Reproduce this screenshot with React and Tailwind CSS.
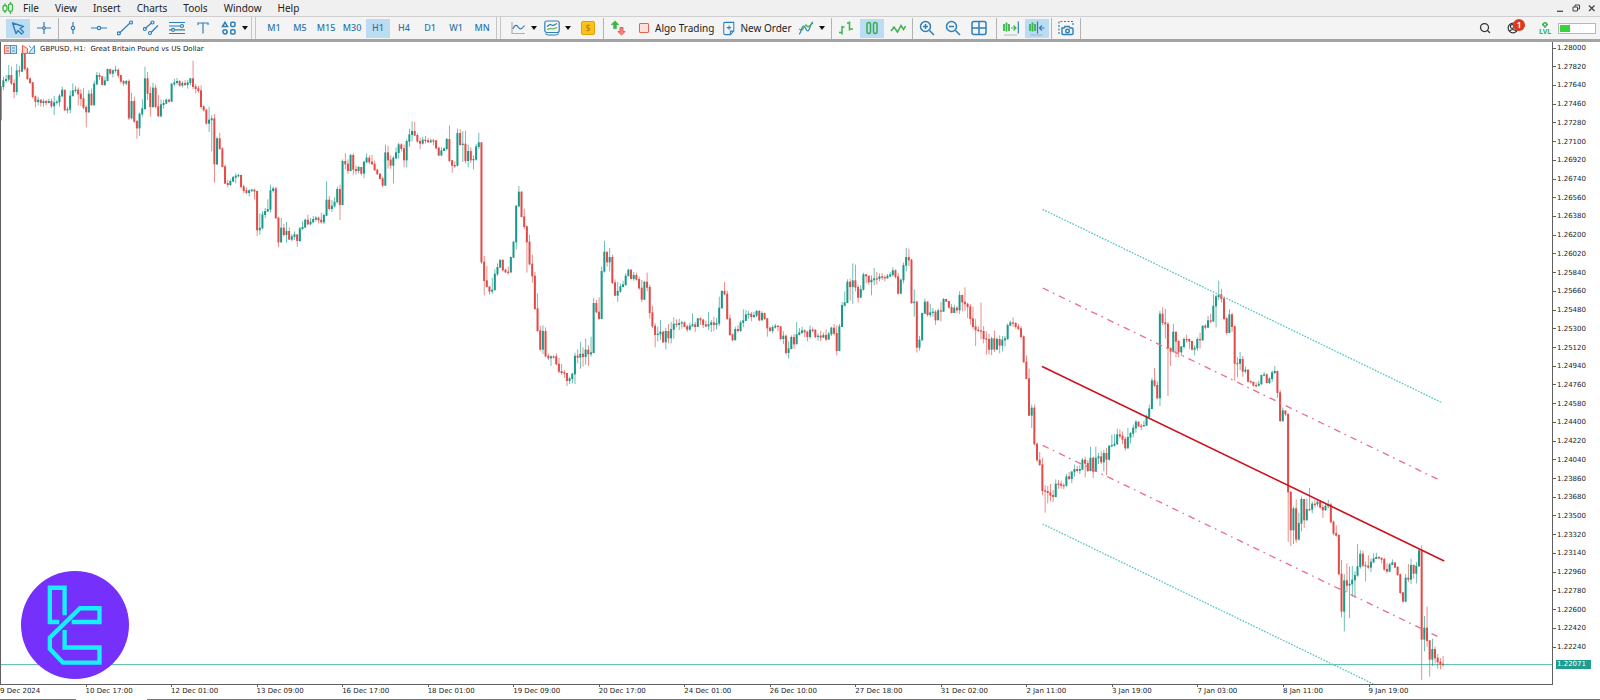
import { Search } from 'lucide-react'

// Bars are [close, high, low]; each one opens at the previous close.
// Values are thirds of a pixel below the segment's base.
const SEGMENTS = [
  {
    base: 120,
    bars: [
      [140,138,240],[122,110,150],[118,105,128],[106,75,125],[130,80,135],[155,118,175],[92,72,165],[94,78,110],
      [40,30,95],[86,40,92],[116,82,120],[128,112,132],[170,126,176],[185,166,202],[180,170,196],[188,178,200],
      [184,178,200],[188,180,196],[184,176,190],[198,176,204],[188,168,225],[186,180,194],[168,162,200],[150,140,172],
      [210,150,212],[208,200,220],[168,152,220],[152,130,168],[150,138,158],[162,142,196],[176,148,198],[202,144,208],
      [216,196,262],[162,150,218],[195,146,196],[132,122,196],[106,96,136],[110,98,120],[134,108,136],[122,110,138],
      [88,86,124],[100,86,104],[92,88,112],[90,78,98],[106,86,114],[124,104,130],[130,120,138],[124,120,136],
      [234,118,240],[184,158,238],[244,170,248],[264,240,296],[222,218,288],[206,178,230],[116,80,210],[160,96,180],
      [200,140,230],[144,128,204],[200,134,204],[228,165,230],[194,178,232],[190,180,206],[180,176,192],[184,176,188],
      [132,130,184],[128,116,138],[124,114,134],[136,120,140],[130,124,142],[134,120,138],[128,120,146],[116,114,136],
      [140,62,148],[146,132,160],[152,138,158],[200,136,206],[210,196,214],[250,206,254],[240,200,276],[236,226,334],
      [372,222,428],[296,290,376],[326,278,330],[380,322,382],[430,374,432],[434,420,442],[424,418,438],[412,408,425],
      [408,400,430],[406,402,412],[440,404,446],[452,434,460],[458,442,462],[452,448,470],[450,446,456],[454,446,478],
      [570,452,588],[564,520,584],[524,514,568],[514,504,534],[508,478,514],[452,434,518],[446,440,458],[534,440,536],
      [606,530,622],[564,534,608],[584,552,590],[574,546,608],[598,562,600],[590,582,604],[584,574,600],[602,590,620],
      [566,560,606],[562,544,570],[540,536,562],[552,524,556],[546,534,556],[538,528,548],[534,528,544],[540,530,550],
      [546,518,550],[526,520,552],[480,424,528],[506,468,512],[498,480,516],[486,472,502],[448,440,490],[494,434,540],
      [364,358,496],
    ],
  },
  {
    base: 330,
    bars: [
      [162,130,178],[182,148,192],[136,132,184],[178,130,194],[182,166,194],[172,168,190],[190,180,196],[156,152,204],
      [144,130,160],[156,136,162],[162,134,164],[180,152,182],[192,176,194],[206,190,208],[226,200,232],[128,104,228],
      [150,108,176],[166,136,176],[144,138,220],[128,112,148],[104,98,146],[116,100,124],[150,104,172],[94,88,172],
      [74,56,110],[64,34,94],[76,36,78],[94,70,98],[100,84,118],[90,80,104],[92,78,100],[96,84,98],
      [92,86,98],[92,86,106],[114,90,118],[136,110,138],[122,112,136],[116,112,122],[88,84,122],[152,46,156],
      [166,150,188],[166,154,174],[70,56,170],[104,58,108],[102,64,156],[152,62,160],[124,104,172],[150,112,158],
      [148,136,178],[110,102,152],[98,68,118],[456,96,462],[512,438,556],[530,468,532],[544,532,554],[540,504,552],
      [492,478,540],[472,460,498],[450,450,472],[480,450,484],[486,476,490],[486,470,494],[442,440,490],[396,394,444],
      [288,286,418],[246,228,292],[320,244,322],[350,296,358],[396,346,488],[462,374,466],[498,434,518],[596,486,600],
      [662,550,666],[718,648,722],[664,646,732],[738,652,742],[744,730,750],[740,736,768],[740,736,746],[762,730,766],
      [784,744,790],[788,762,794],[790,780,804],[812,790,828],[806,800,822],[792,788,820],[738,728,822],[742,718,760],
      [732,696,776],[740,712,770],[720,686,764],[732,706,768],[728,680,740],[580,564,730],[606,570,610],[626,562,630],
      [484,470,628],[426,392,488],[456,426,470],[442,414,484],[518,434,522],[556,508,558],[544,516,576],[530,520,548],
      [524,512,530],[498,490,528],[480,476,498],[506,478,508],[496,486,512],[508,488,512],[534,500,540],[568,510,576],
      [516,514,570],[532,488,544],[608,524,626],[648,588,654],[674,640,712],[672,650,694],[666,630,690],
    ],
  },
  {
    base: 690,
    bars: [
      [336,302,338],[304,294,358],[324,282,340],[298,276,340],[282,262,326],[284,268,292],[280,266,300],[278,272,296],
      [290,274,292],[298,284,306],[288,278,302],[284,250,290],[290,276,306],[266,264,290],[270,262,284],[284,266,294],
      [288,272,292],[284,246,300],[278,270,306],[284,260,304],[280,264,298],[234,200,288],[184,180,236],[192,156,196],
      [266,182,270],[314,254,318],[330,310,334],[298,290,330],[302,286,308],[278,272,306],[272,238,292],[254,240,272],
      [252,242,266],[260,246,274],[256,246,264],[244,240,262],[270,240,274],[250,244,272],[266,248,270],[294,264,320],
      [302,290,306],[292,286,310],[288,282,296],[290,286,304],[326,288,330],[318,304,342],[368,314,374],[356,334,386],
      [322,316,358],[342,312,356],[314,276,342],[308,294,316],[302,290,312],[306,298,322],[320,302,334],[300,286,326],
      [300,292,308],[320,298,324],[318,310,332],[322,302,334],[316,308,324],[328,298,334],[312,306,328],[294,290,318],
      [310,282,316],[362,286,376],[290,282,364],[226,216,290],[218,184,230],[156,148,220],[170,146,212],[152,100,222],
      [172,104,184],[202,164,218],[178,166,204],[134,128,182],[138,132,160],[156,138,164],[150,136,196],[146,114,166],
      [146,126,164],[140,130,154],[142,130,150],[144,136,154],[138,132,146],[134,126,142],[122,112,140],[140,118,146],
      [190,130,194],[150,146,192],[106,98,160],[82,54,124],[90,56,108],[218,86,222],[216,178,260],[352,212,368],
      [330,318,362],[250,248,332],[216,206,252],[254,214,260],[248,222,262],[246,234,260],[270,240,284],[242,236,264],
      [244,216,274],[208,204,246],[214,206,216],[232,212,236],[248,222,250],[234,224,248],[240,228,250],[196,184,252],
      [216,194,244],[222,172,242],[230,218,264],[266,222,284],[290,230,296],[300,266,348],[302,290,306],[304,218,328],
      [326,288,340],[328,304,374],[358,312,374],[326,320,376],[358,302,366],[328,322,360],[346,316,370],[330,318,364],
      [326,318,350],[286,280,330],[278,272,288],[280,262,290],[290,276,296],[296,282,300],[320,288,326],[396,316,398],
    ],
  },
  {
    base: 810,
    bars: [
      [326,256,328],[436,296,438],[414,404,474],[522,404,526],[570,518,576],[584,546,588],[662,564,676],[664,646,728],
      [668,648,700],[676,642,694],[680,660,696],[642,628,682],[642,630,656],[646,632,656],[646,640,658],[620,612,650],
      [626,606,630],[606,602,640],[598,584,620],[602,588,608],[598,586,612],[570,564,600],[580,560,622],[602,570,606],
      [564,530,604],[604,560,624],[564,530,606],[560,548,582],[576,544,582],[550,540,604],[568,534,616],[528,526,572],
      [526,494,532],[522,492,530],[494,476,524],[498,478,506],[508,484,522],[534,500,542],[502,474,536],[490,486,520],
      [474,464,502],[456,450,488],[468,454,472],[468,462,480],[466,452,470],[440,434,468],[416,404,444],[332,324,418],
      [346,294,352],[384,334,388],[132,122,408],[158,112,166],[162,116,206],[234,156,378],[244,234,288],[186,162,248],
      [214,186,262],[246,210,262],[230,228,258],[208,202,236],[208,194,218],[214,206,236],[238,212,242],[234,226,256],
      [208,202,242],[210,188,236],[168,166,212],[172,162,178],[152,138,174],[154,132,160],[108,72,154],[80,74,172],
      [74,32,90],[86,56,98],[146,82,150],[188,140,194],[134,118,190],[170,128,186],[280,166,332],[280,262,322],
      [268,246,300],[304,258,320],[300,290,310],[334,298,338],[336,332,340],[346,342,350],[346,336,352],[342,332,350],
      [316,314,344],[314,306,318],[338,310,340],[326,322,342],[308,302,336],[304,288,312],[368,302,384],[452,360,456],
      [422,412,456],[432,424,438],[666,432,816],[780,664,828],[716,710,822],[808,688,818],[760,728,812],[688,680,784],
      [750,688,774],[718,686,752],[718,654,722],[702,694,730],[702,690,712],[696,690,710],[712,690,716],[720,704,744],
      [708,700,722],[704,690,714],[756,698,760],[790,752,796],[796,766,800],[912,792,914],[1024,870,1042],[932,912,1084],
      [946,880,966],[942,890,1044],[930,888,980],[916,904,984],[890,822,920],[852,840,896],[886,842,892],[888,874,934],
      [892,856,896],[876,866,906],[866,850,880],[862,848,866],[864,858,868],[868,862,880],[898,864,902],[904,880,910],
      [884,878,906],[878,868,884],[892,878,894],[914,888,918],[968,910,972],[994,966,998],[924,912,996],[928,882,936],
      [886,866,942],[910,884,926],[888,876,940],[842,838,890],[1108,826,1230],[1074,1038,1144],[1112,1010,1130],
      [1168,1110,1220],[1138,1106,1188],[1164,1130,1180],[1176,1152,1196],[1182,1164,1198],[1184,1158,1190],
    ],
  },
]

const bars = SEGMENTS.flatMap((s) => s.bars.map((b) => b.map((v) => v + s.base)))
const candles = bars.map(([close, high, low], i) => {
  const open = i === 0 ? 360 : bars[i - 1][0]
  return { x: 2 + i * 8.013, open, close, high, low, up: close < open }
})

const PRICES = Array.from({ length: 33 }, (_, i) => (1.28 - i * 0.0018).toFixed(5))

const TIMES = [
  '9 Dec 2024', '10 Dec 17:00', '12 Dec 01:00', '13 Dec 09:00', '16 Dec 17:00', '18 Dec 01:00',
  '19 Dec 09:00', '20 Dec 17:00', '24 Dec 01:00', '26 Dec 10:00', '27 Dec 18:00', '31 Dec 02:00',
  '2 Jan 11:00', '3 Jan 19:00', '7 Jan 03:00', '8 Jan 11:00', '9 Jan 19:00',
]

const MENU = ['File', 'View', 'Insert', 'Charts', 'Tools', 'Window', 'Help']
const TIMEFRAMES = ['M1', 'M5', 'M15', 'M30', 'H1', 'H4', 'D1', 'W1', 'MN']

function Icon({ children, className = 'w-4 h-4 text-[#2f7fb8]' }) {
  return (
    <svg viewBox="0 0 16 16" fill="none" stroke="currentColor" strokeWidth="1.2" className={className} aria-hidden="true">
      {children}
    </svg>
  )
}

function ToolButton({ label, active, children }) {
  return (
    <button
      type="button"
      aria-label={label}
      className={`w-6 h-[19px] shrink-0 flex items-center justify-center ${active ? 'bg-[#bcdcf4]' : 'hover:bg-[#dcecf8]'}`}
    >
      {children}
    </button>
  )
}

function Arrow({ label }) {
  return (
    <button type="button" aria-label={label} className="w-2 h-[19px] shrink-0 flex items-center justify-center">
      <svg viewBox="0 0 6 4" className="w-[6px] h-1" aria-hidden="true"><path d="M0 0h6L3 4z" fill="#111" /></svg>
    </button>
  )
}

function Divider() {
  return <div className="w-px h-[21px] shrink-0 bg-[#b4b4b4]" />
}

function Grip() {
  return <div className="w-[5px] h-[22px] shrink-0 border-x border-[#c4c4c4]" />
}

function MenuBar() {
  return (
    <header className="h-4 shrink-0 flex items-center bg-[#f0f0f0] pl-[2px] pr-1">
      <svg viewBox="0 0 12 12" className="w-3 h-3" fill="none" stroke="#3cb54a" strokeWidth="1.3" aria-hidden="true">
        <path d="M3 1.5v2M3 9v2M8.500 0v2M8.500 9.500v2.500" />
        <rect x="1" y="3.500" width="4" height="5.500" rx="1.800" />
        <rect x="6.500" y="2" width="4" height="7.500" rx="1.800" />
      </svg>
      <nav className="flex items-center gap-4 pl-[9px] text-[10px] leading-4 text-[#222]">
        {MENU.map((m) => (
          <button key={m} type="button" className="hover:text-[#2f7fb8]">{m}</button>
        ))}
      </nav>
      <div className="ml-auto flex items-center gap-2 text-[#444]">
        <button type="button" aria-label="Minimize">
          <svg viewBox="0 0 8 8" className="w-2 h-2" stroke="currentColor" strokeWidth="1.3"><path d="M1 7.300h6" /></svg>
        </button>
        <button type="button" aria-label="Restore">
          <svg viewBox="0 0 8 8" className="w-2 h-2" fill="none" stroke="currentColor"><path d="M1 3h4.500v4H1zM3 3V1h4.500v4h-2" /></svg>
        </button>
        <button type="button" aria-label="Close">
          <svg viewBox="0 0 8 8" className="w-2 h-2" stroke="currentColor" strokeWidth="1.300"><path d="M1 1.500l5.500 5.500M6.500 1.500L1 7" /></svg>
        </button>
      </div>
    </header>
  )
}

function Toolbar() {
  return (
    <div className="h-[23px] shrink-0 flex items-center bg-[#f4f4f4] border-t border-[#cfcfcf] text-[10px] text-[#222]">
      <div className="flex items-center gap-[2px] pl-[6px]">
        <ToolButton label="Cursor" active>
          <Icon><path d="M2.500 3l11 3.500-3.500 2 3.500 3.500-2 2L8 10.500l-2 3z" strokeLinejoin="round" strokeWidth="1.400" /></Icon>
        </ToolButton>
        <ToolButton label="Crosshair">
          <Icon><path d="M8 2v4.500M8 9.500V14M1 8h5.500M9.500 8H15" /><circle cx="8" cy="8" r="1.300" /></Icon>
        </ToolButton>
        <Divider />
        <ToolButton label="Vertical line">
          <Icon><path d="M8 2v4.300M8 9.700V14" /><circle cx="8" cy="8" r="1.700" /></Icon>
        </ToolButton>
        <ToolButton label="Horizontal line">
          <Icon><path d="M0 8h6.300M9.700 8H16" /><circle cx="8" cy="8" r="1.700" /></Icon>
        </ToolButton>
        <ToolButton label="Trend line">
          <Icon><path d="M2.500 13L13 3" /><circle cx="1.800" cy="13.400" r="1.500" /><circle cx="14" cy="2.500" r="1.500" /></Icon>
        </ToolButton>
        <ToolButton label="Equidistant channel">
          <Icon>
            <path d="M2 8.500L8.500 3M8 12.500L15 5.500" />
            <circle cx="1.800" cy="9" r="1.500" /><circle cx="9.500" cy="2.500" r="1.500" /><circle cx="7" cy="13" r="1.500" />
          </Icon>
        </ToolButton>
        <ToolButton label="Fibonacci">
          <Icon><path d="M0 2.500h16M0 6h11.500M0 9.800h2.500M5.500 9.800H16M0 13.500h16" /><circle cx="13" cy="6" r="1.500" /><circle cx="4" cy="9.800" r="1.500" /></Icon>
        </ToolButton>
        <ToolButton label="Text">
          <Icon><path d="M3 5V3h10v2M8 3v10.500" /></Icon>
        </ToolButton>
        <div className="flex">
          <ToolButton label="Objects">
            <Icon>
              <path d="M4 2.300L6.500 6.500h-5z" strokeWidth="1.500" /><rect x="9.800" y="2.300" width="4.200" height="4.200" rx="1" strokeWidth="1.500" />
              <circle cx="4" cy="11.800" r="2.100" strokeWidth="1.500" /><rect x="9.800" y="9.700" width="4.200" height="4.200" rx="1.200" strokeWidth="1.500" />
            </Icon>
          </ToolButton>
          <Arrow label="More objects" />
        </div>
        <Grip />
      </div>

      <div className="flex items-center gap-[2px] pl-[6px]">
        {TIMEFRAMES.map((t) => (
          <button
            key={t}
            type="button"
            className={`w-6 h-[19px] flex items-center justify-center text-[9px] font-medium text-[#2a76ad] ${t === 'H1' ? 'bg-[#bcdcf4]' : 'hover:bg-[#dcecf8]'}`}
          >
            {t}
          </button>
        ))}
        <Grip />
      </div>

      <div className="flex items-center pl-[5px]">
        <ToolButton label="Chart type"><Icon><path d="M2 2v11.500h13" stroke="#b0b0b0" /><path d="M3 9c2-5 4-4 5.500-1.500S12 9 14.500 5.500" /></Icon></ToolButton>
        <Arrow label="Chart types" />
        <div className="w-[2px]" />
        <ToolButton label="Indicators">
          <Icon>
            <rect x=".8" y="1" width="14.400" height="11.500" rx="2" /><path d="M1.500 13.500q1 1.500 3 1.500h7q2 0 3-1.500" />
            <path d="M3 6.500l3-2 3 1 4-2" /><path d="M3 9.500l3-1 3 .5 4-1.500" stroke="#3cb54a" />
          </Icon>
        </ToolButton>
        <Arrow label="Indicator list" />
        <div className="w-1" />
        <ToolButton label="Market">
          <span className="w-[14px] h-[14px] rounded-[2px] bg-[#fbc21a] border border-[#e0a00c] text-[#b47800] text-[9px] leading-3 text-center">$</span>
        </ToolButton>
        <div className="w-[3px]" />
        <Divider />
        <div className="w-[2px]" />
        <ToolButton label="Signals">
          <Icon>
            <path d="M5 .8l4 3.900H6.500v4h-3v-4H1z" fill="#3cb54a" stroke="#3cb54a" strokeWidth=".5" />
            <path d="M11.500 15l3.700-3.500H13V7.500h-3v4H7.800z" fill="#f2877f" stroke="#e5534b" strokeWidth=".9" />
          </Icon>
        </ToolButton>
      </div>

      <button type="button" className="flex items-center gap-[6px] pl-[9px] h-[19px]">
        <span className="w-[10px] h-[10px] rounded-[1px] border border-[#e5634f] bg-[#fde0da]" />
        Algo Trading
      </button>
      <button type="button" className="flex items-center gap-1 pl-2 h-[19px]">
        <Icon className="w-[14px] h-[15px] text-[#2f7fb8]">
          <path d="M3 1h10.500v10l-4 4H3.500Q2 15 2 13.500V2Q2 1 3 1zM13.500 11h-4v4" /><path d="M8 4.500v5M5.500 7h5" />
        </Icon>
        New Order
      </button>
      <div className="flex items-center gap-[2px] pl-[2px]">
        <div className="flex">
          <ToolButton label="Strategy">
            <Icon>
              <path d="M1 14c2 0 2.500-8 4.500-8S8 11.500 10 11 12 3 15 2" />
              <path d="M1 9l3 1 4-5 2 2 5-4" stroke="#3cb54a" />
            </Icon>
          </ToolButton>
          <Arrow label="Strategies" />
        </div>
        <div className="w-px" />
        <Divider />
        <ToolButton label="Bar chart">
          <Icon className="w-4 h-4 text-[#3cb54a]"><path d="M4 6v8.500M1 12.500h3M4 7h2.500M11.500 1.500v9M9 3h2.500M11.500 9H15" strokeWidth="1.500" /></Icon>
        </ToolButton>
        <ToolButton label="Candlesticks" active>
          <Icon className="w-4 h-4 text-[#35b050]"><rect x="3" y="2.500" width="3.500" height="11" rx="1.500" strokeWidth="1.500" /><rect x="9.500" y="2.500" width="3.500" height="11" rx="1.500" strokeWidth="1.500" /></Icon>
        </ToolButton>
        <ToolButton label="Line chart">
          <Icon className="w-4 h-4 text-[#3cb54a]"><path d="M1 11l3-4 3.500 5L11 5.500l2.500 4L15.500 6" strokeWidth="1.500" /></Icon>
        </ToolButton>
        <Divider />
        <ToolButton label="Zoom in">
          <Icon><circle cx="6.500" cy="6.500" r="5" strokeWidth="1.500" /><path d="M10.500 10.500L15 15M6.500 4v5M4 6.500h5" strokeWidth="1.500" /></Icon>
        </ToolButton>
        <ToolButton label="Zoom out">
          <Icon><circle cx="6.500" cy="6.500" r="5" strokeWidth="1.500" /><path d="M10.500 10.500L15 15M4 6.500h5" strokeWidth="1.500" /></Icon>
        </ToolButton>
        <ToolButton label="Tile windows">
          <Icon><rect x="1" y="1.500" width="14" height="13" rx="2" strokeWidth="1.500" /><path d="M8 1.500v13M1 8h14" strokeWidth="1.500" /></Icon>
        </ToolButton>
        <div className="w-px" />
        <Divider />
        <ToolButton label="Auto scroll">
          <Icon className="w-[18px] h-4 text-[#3cb54a]">
            <path d="M1 4v7M3.500 2.500v9M6 4v7" strokeWidth="1.800" /><path d="M8 8h4.500M10.500 5.500L13 8l-2.500 2.500" /><path d="M15.300 1.500v12" stroke="#2f7fb8" />
            <path d="M1 15h13" stroke="#c0c0c0" />
          </Icon>
        </ToolButton>
        <ToolButton label="Chart shift" active>
          <Icon className="w-[18px] h-4 text-[#3cb54a]">
            <path d="M1 4v7M3.500 2.500v9M6 4v7" strokeWidth="1.800" /><path d="M8.500 1.500v12M11 8h4.500M13 5.500L10.500 8l2.500 2.500" stroke="#2f7fb8" />
            <path d="M1 15h13" stroke="#9fc0d8" />
          </Icon>
        </ToolButton>
        <Divider />
        <ToolButton label="Screenshot">
          <Icon>
            <path d="M1 14V1.500h14V6" strokeDasharray="2 1.500" />
            <path d="M4 8h2l1-1.500h4L12 8h2q1 0 1 1v4.500q0 1-1 1H5q-1 0-1-1z" strokeWidth="1.400" /><circle cx="9.500" cy="11" r="1.800" strokeWidth="1.400" />
          </Icon>
        </ToolButton>
        <Divider />
      </div>

      <div className="ml-auto flex items-center pr-1">
        <button type="button" aria-label="Search"><Search className="w-3 h-3 text-[#333]" strokeWidth={2.5} /></button>
        <button type="button" aria-label="Notifications" className="relative ml-4 w-4 h-[19px] flex items-center">
          <Icon className="w-3 h-3 text-[#333]"><circle cx="8" cy="8" r="6.500" strokeWidth="1.600" /><circle cx="7" cy="6" r="2.500" strokeWidth="1.500" /><path d="M3 12.500q4-5 10 0" strokeWidth="1.500" /></Icon>
          <span className="absolute left-[6px] top-0 w-3 h-3 rounded-full bg-[#e03a1e] text-white text-[9px] leading-3 font-semibold text-center">1</span>
        </button>
        <div className="ml-4 w-3 flex flex-col items-center text-[#2fb34a]">
          <svg viewBox="0 0 8 6" className="w-2 h-[6px]" fill="none" stroke="currentColor" strokeWidth="1.400" aria-hidden="true">
            <circle cx="4" cy="2.500" r="1.700" /><path d="M1 2.500h1M6 2.500h1M4 4.500V6" />
          </svg>
          <span className="text-[7px] leading-[7px] font-bold">LVL</span>
        </div>
        <div className="ml-[7px] w-[38px] h-[11px] bg-white border border-[#b8b8b8] p-px">
          <div className="w-[10px] h-full bg-[#35d43b]" />
        </div>
      </div>
    </div>
  )
}

function PriceChart() {
  return (
    <svg viewBox="3 126 4653 1926" preserveAspectRatio="none" className="block w-full h-full" role="img" aria-label="GBPUSD hourly candles">
      <path d="M3 1994H4656" stroke="#4fb3a6" strokeWidth="3" />
      {candles.map((c) => {
        const top = Math.min(c.open, c.close)
        return (
          <g key={c.x} fill={c.up ? '#189a8a' : '#e24b47'}>
            <rect x={c.x - 1} y={c.high} width="2.500" height={c.low - c.high} opacity=".75" />
            <rect x={c.x - 3} y={top - 1} width="6" height={Math.max(4, Math.abs(c.open - c.close) + 2)} />
          </g>
        )
      })}
      <g fill="none" stroke="#5cc6c4" strokeWidth="4" strokeDasharray="5 4">
        <path d="M3128 628L4326 1208" />
        <path d="M3128 1572L4120 2052" />
      </g>
      <g fill="none" stroke="#e8708e" strokeWidth="4" strokeDasharray="20 14 5 15">
        <path d="M3128 864L4320 1441" />
        <path d="M3128 1336L4320 1913" />
      </g>
      <path d="M3128 1100L4331 1682" fill="none" stroke="#cc1420" strokeWidth="5" strokeLinecap="round" />
    </svg>
  )
}

function Watermark() {
  return (
    <svg viewBox="64 64 322 322" className="absolute left-5 bottom-[5px] w-[108px] h-[108px]" fill="none" aria-hidden="true">
      <circle cx="225" cy="225" r="161" fill="#7530fb" />
      <g stroke="#16effc" strokeWidth="13">
        <path d="M178 216H150V114H194V196" />
        <path d="M215 216H298V175H240L150 263V296L189 337H298V292H194V240" />
      </g>
    </svg>
  )
}

export default function App() {
  return (
    <div className="h-screen flex flex-col overflow-hidden bg-white font-['Noto_Sans',sans-serif]">
      <MenuBar />
      <Toolbar />
      <div className="h-[3px] shrink-0 bg-[#a3a3a3]" />

      <main className="flex-1 min-h-0 flex font-['DejaVu_Sans',sans-serif] text-[7px] text-[#222]">
        <section className="flex-1 min-w-0 flex flex-col">
          <div className="relative flex-1 min-h-0 border-x border-b border-[#606060]">
            <PriceChart />
            <div className="absolute left-[3px] top-px flex items-center gap-[5px] leading-3">
              <svg viewBox="0 0 13 9" className="w-[13px] h-[9px]" aria-hidden="true">
                <rect x=".5" y=".5" width="6" height="8" fill="#fbd0cc" stroke="#e5625a" /><rect x="6.500" y=".5" width="6" height="8" fill="#cfe5f6" stroke="#4a93c8" />
                <path d="M2 3h3M2 6h3" stroke="#e5625a" /><path d="M8 3h3M8 6h3" stroke="#4a93c8" />
              </svg>
              <svg viewBox="0 0 13 9" className="w-[13px] h-[9px]" aria-hidden="true">
                <path d="M.5 8.500v-8l5 3v5z" fill="#fbd0cc" stroke="#e5625a" /><path d="M12.500.5v8h-6zM7 .5L9 3" fill="#cfe5f6" stroke="#4a93c8" />
              </svg>
              <h1 className="whitespace-pre">{'GBPUSD, H1:  Great Britain Pound vs US Dollar'}</h1>
            </div>
            <Watermark />
          </div>
          <div className="h-[14px] shrink-0 flex pr-[99px] leading-2">
            {TIMES.map((t, i) => (
              <div key={t} className="flex-1 min-w-0 whitespace-nowrap">
                <div className={`w-px h-[2px] ${i === 0 ? '' : 'bg-[#606060]'}`} />
                {t}
              </div>
            ))}
          </div>
        </section>

        <aside className="w-[47px] shrink-0 flex flex-col pb-[30px]">
          <div className="flex-1 min-h-0 flex flex-col justify-between">
            {PRICES.map((p) => (
              <div key={p} className="flex items-center gap-px leading-3">
                <span className="w-[3px] h-px bg-[#606060]" />
                {p}
              </div>
            ))}
          </div>
          <div className="mt-[7px] ml-[3px] w-[35px] h-[9px] pl-px bg-[#1f9e90] text-white leading-[9px]">1.22071</div>
        </aside>
      </main>

      <footer className="h-px shrink-0 flex">
        <div className="w-[76px] bg-[#777]" />
        <div className="w-[71px]" />
        <div className="flex-1 bg-[#777]" />
      </footer>
    </div>
  )
}
